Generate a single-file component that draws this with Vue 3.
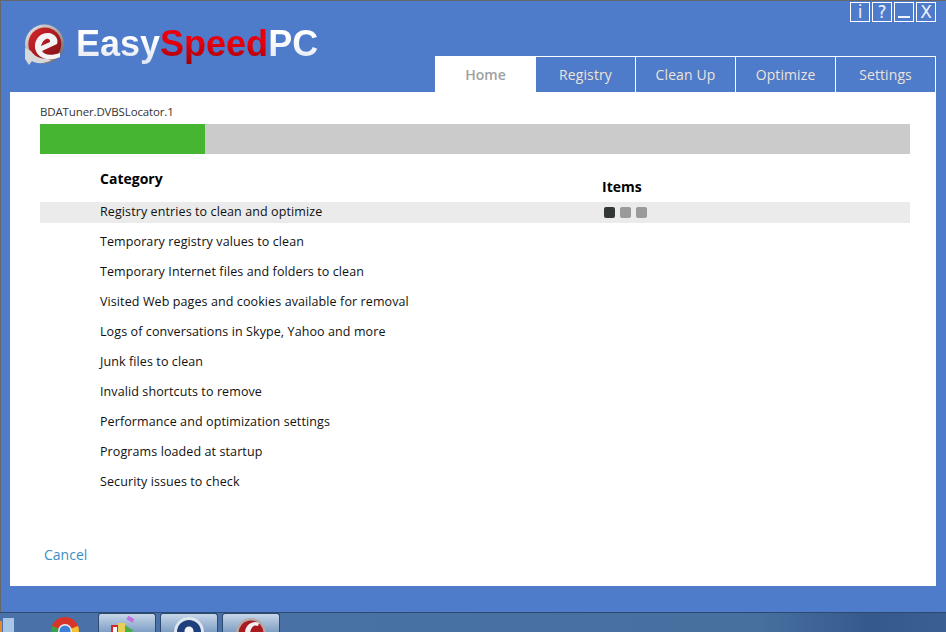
<script setup>
const tabs = ['Registry', 'Clean Up', 'Optimize', 'Settings']
const rows = [
  'Registry entries to clean and optimize',
  'Temporary registry values to clean',
  'Temporary Internet files and folders to clean',
  'Visited Web pages and cookies available for removal',
  'Logs of conversations in Skype, Yahoo and more',
  'Junk files to clean',
  'Invalid shortcuts to remove',
  'Performance and optimization settings',
  'Programs loaded at startup',
  'Security issues to check'
]
</script>

<template>
  <div class="page">
    <div class="window">
      <header class="head">
        <div class="brand">
          <svg class="logo" width="42" height="42" viewBox="0 0 42 42">
            <defs>
              <linearGradient id="rim" x1="0" y1="0" x2="1" y2="1">
                <stop offset="0" stop-color="#ecebeb" />
                <stop offset="0.55" stop-color="#a8a0a0" />
                <stop offset="1" stop-color="#5c5456" />
              </linearGradient>
              <linearGradient id="disc" x1="0" y1="0" x2="1" y2="1">
                <stop offset="0" stop-color="#d8262c" />
                <stop offset="1" stop-color="#7c1016" />
              </linearGradient>
            </defs>
            <circle cx="20.5" cy="21" r="19.5" fill="url(#rim)" />
            <circle cx="20.8" cy="21" r="16.5" fill="url(#disc)" />
            <path d="M11 25 C10 15 18 9 25 10 C31 11 35 16 33 21 L18 28 C20 32 27 33 36 30 L36 34 C26 39 13 36 11 25 Z M17 23 L26 19 C27 15 20 13 17 23 Z" fill="#f4f2f2" fill-rule="evenodd" />
            <path d="M1 25 L7 28 C10 33 16 36 24 36 L28 37 C20 41 12 41 8 38 L5 42 L1 36 Z" fill="#d8d8d8" />
          </svg>
          <div class="wordmark"><span class="w">Easy</span><span class="r">Speed</span><span class="w">PC</span></div>
        </div>
        <div class="head-right">
          <div class="controls">
            <span class="ctl">i</span>
            <span class="ctl">?</span>
            <span class="ctl min"><i></i></span>
            <span class="ctl">X</span>
          </div>
          <nav class="tabs">
            <div class="tab active">Home</div>
            <div v-for="t in tabs" :key="t" class="tab">{{ t }}</div>
          </nav>
        </div>
      </header>

      <main class="panel">
        <div class="status">BDATuner.DVBSLocator.1</div>
        <div class="bar"><div class="fill"></div></div>
        <div class="titles">
          <div class="t-cat">Category</div>
          <div class="t-items">Items</div>
        </div>
        <div class="rows">
          <div v-for="(r, i) in rows" :key="r" class="row" :class="{ on: i === 0 }">
            <span class="label">{{ r }}</span>
            <span v-if="i === 0" class="dots"><i class="dark"></i><i></i><i></i></span>
          </div>
        </div>
        <a class="cancel">Cancel</a>
      </main>
    </div>

    <footer class="taskbar">
      <div class="start"></div>
      <div class="folder"></div>
      <svg class="chrome" width="30" height="30" viewBox="0 0 30 30">
        <circle cx="15" cy="15" r="14" fill="#d8352a" />
        <path d="M15 15 L2 10 A14 14 0 0 0 15 29 Z" fill="#3aa24a" />
        <path d="M15 15 L28 10 A14 14 0 0 1 15 29 Z" fill="#f2c230" />
        <circle cx="15" cy="15" r="7" fill="#e8eef6" />
        <circle cx="15" cy="15" r="5.5" fill="#3d7fd8" />
      </svg>
      <div class="tb">
        <svg width="34" height="19" viewBox="0 0 34 19">
          <rect x="1" y="11" width="7" height="8" fill="#d8242a" />
          <rect x="3" y="13" width="4" height="6" fill="#fff" />
          <rect x="8" y="9" width="7" height="10" fill="#e8cf5a" />
          <path d="M15 11 L24 17 L17 19 L15 19 Z" fill="#4ab04a" />
          <rect x="17" y="3" width="7" height="4" fill="#c070e0" transform="rotate(30 20 5)" />
        </svg>
      </div>
      <div class="tb">
        <svg width="34" height="19" viewBox="0 0 34 19">
          <circle cx="17" cy="18" r="15" fill="#dfe6ee" />
          <circle cx="17" cy="18" r="12" fill="#1d3f7c" />
          <circle cx="17" cy="17" r="4.5" fill="#f2f4f8" />
        </svg>
      </div>
      <div class="tb">
        <svg width="34" height="19" viewBox="0 0 34 19">
          <circle cx="17" cy="19" r="15" fill="#b9a8a8" />
          <circle cx="17" cy="19" r="12.5" fill="#a81a20" />
          <path d="M11 19 C11 10 20 6 25 9 L24 12 C20 10 17 13 16 19 Z" fill="#f2f0f0" />
        </svg>
      </div>
    </footer>
  </div>
</template>

<style>
html, body { margin: 0; background: #4f7bc9; }
</style>

<style scoped>
.page {
  width: 946px;
  height: 632px;
  display: flex;
  flex-direction: column;
  overflow: hidden;
  font-family: "Open Sans", "Noto Sans", sans-serif;
}
.window {
  height: 612px;
  box-sizing: border-box;
  background: #4f7bcb;
  border-top: 1px solid #666;
  border-left: 1px solid #666;
  padding: 0 10px 26px 9px;
  display: flex;
  flex-direction: column;
}
.head {
  height: 91px;
  display: flex;
  justify-content: space-between;
}
.brand {
  display: flex;
  align-items: flex-start;
  padding: 22px 0 0 14px;
  gap: 10px;
}
.logo { flex: none; }
.wordmark {
  font: bold 36px/42px "Liberation Sans", Arial, sans-serif;
  letter-spacing: 0;
}
.w {
  background: linear-gradient(#ffffff 35%, #dfe5f0);
  -webkit-background-clip: text;
  background-clip: text;
  color: transparent;
}
.r {
  background: linear-gradient(#e8000c 45%, #a00008);
  -webkit-background-clip: text;
  background-clip: text;
  color: transparent;
}
.head-right {
  display: flex;
  flex-direction: column;
  align-items: flex-end;
  justify-content: space-between;
}
.controls {
  display: flex;
  gap: 2px;
  margin-top: 1px;
}
.ctl {
  width: 20px;
  height: 20px;
  box-sizing: border-box;
  border: 1px solid #fff;
  color: #eef2fa;
  font: 17px/18px "DejaVu Sans", sans-serif;
  text-align: center;
  position: relative;
}
.min i {
  position: absolute;
  left: 3px;
  right: 3px;
  bottom: 3px;
  height: 2px;
  background: #eef2fa;
}
.tabs {
  display: flex;
  height: 36px;
}
.tab {
  width: 100px;
  box-sizing: border-box;
  border-top: 1px solid #fff;
  border-right: 1px solid #fff;
  color: #e2e6ee;
  text-shadow: 0 0 1px #6f7480;
  font-size: 14px;
  line-height: 35px;
  text-align: center;
  letter-spacing: 0.1px;
}
.tab.active {
  width: 101px;
  background: #fff;
  border: 0;
  color: #a0a0a0;
  font-weight: 600;
  text-shadow: none;
  line-height: 37px;
  letter-spacing: 0;
}
.panel {
  flex: 1;
  background: #fff;
  padding: 11px 26px 0 30px;
  display: flex;
  flex-direction: column;
  position: relative;
}
.status {
  font-size: 11.5px;
  line-height: 18px;
  color: #333;
  letter-spacing: -0.14px;
}
.bar {
  height: 30px;
  margin-top: 3px;
  background: #cbcbcb;
}
.fill {
  width: 165px;
  height: 100%;
  background: #46b632;
}
.titles {
  height: 48px;
  display: grid;
  grid-template-columns: 562px 1fr;
  font-size: 14px;
  font-weight: 700;
  color: #000;
}
.t-cat { padding: 15px 0 0 60px; line-height: 20px; }
.t-items { padding-top: 23px; line-height: 20px; }
.rows { display: flex; flex-direction: column; gap: 9px; }
.row {
  height: 21px;
  display: grid;
  grid-template-columns: 564px 1fr;
  align-items: center;
}
.row.on { background: #ebebeb; }
.label {
  padding-left: 60px;
  padding-bottom: 2px;
  font-size: 12.5px;
  line-height: 19px;
  color: #111;
  letter-spacing: 0.1px;
  white-space: nowrap;
}
.dots { display: flex; gap: 5px; }
.dots i {
  width: 11px;
  height: 11px;
  border-radius: 2px;
  background: #9a9a9a;
}
.dots i.dark { background: #333835; }
.cancel {
  position: absolute;
  left: 34px;
  top: 453px;
  font-size: 14px;
  line-height: 20px;
  color: #3b8fc4;
}
.taskbar {
  height: 20px;
  box-sizing: border-box;
  border-top: 1px solid #2c4a70;
  background: linear-gradient(90deg, #4a72a8 0%, #47709f 80%, #36598c 92%, #3a5f92 100%);
  position: relative;
  display: flex;
  padding-left: 98px;
  gap: 4px;
}
.start {
  position: absolute;
  left: 0;
  top: 8px;
  width: 2px;
  height: 11px;
  background: #e8872c;
}
.folder {
  position: absolute;
  left: 3px;
  top: 5px;
  width: 11px;
  height: 14px;
  background: #a9c6e6;
}
.chrome {
  position: absolute;
  left: 50px;
  top: 3px;
}
.tb {
  width: 58px;
  height: 19px;
  box-sizing: border-box;
  border: 1px solid #2c4a70;
  border-bottom: 0;
  border-radius: 3px 3px 0 0;
  background: linear-gradient(#c6d6e8, #7f9fc4);
  display: flex;
  justify-content: center;
}
</style>
